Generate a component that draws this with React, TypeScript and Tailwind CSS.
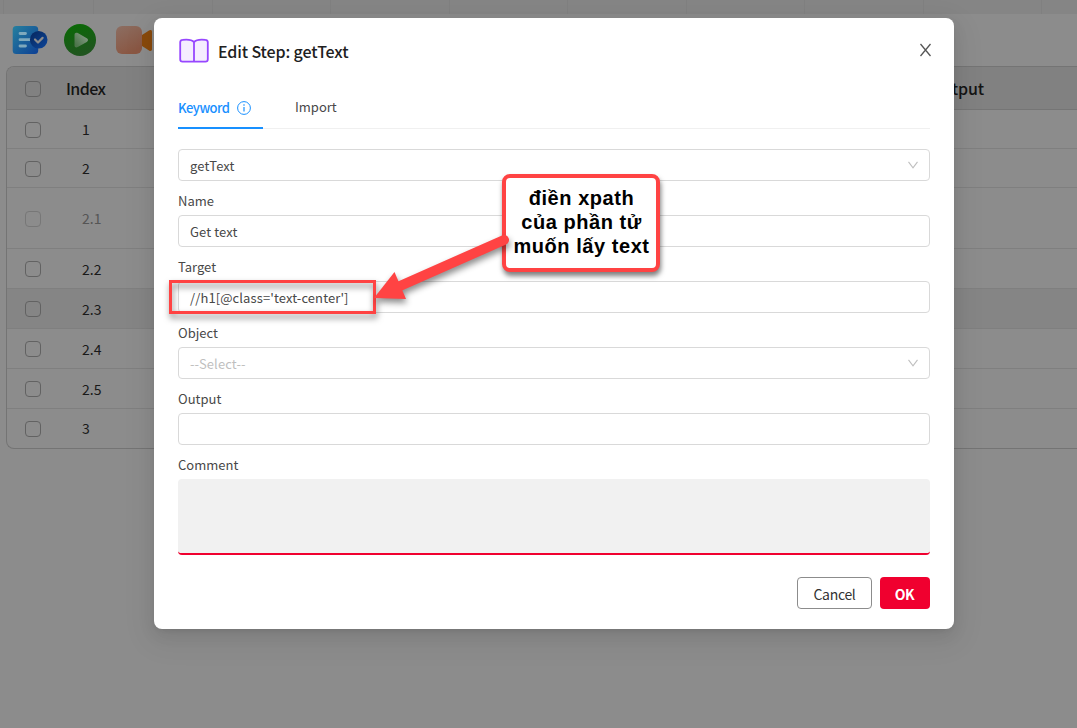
import React from "react";

type Row = { id: string; h: string; faded?: boolean; active?: boolean; up?: boolean };

const rows: Row[] = [
  { id: "1", h: "h-[39px]", up: true },
  { id: "2", h: "h-[39px]", up: true },
  { id: "2.1", h: "h-[61px]", faded: true, up: true },
  { id: "2.2", h: "h-[40px]" },
  { id: "2.3", h: "h-[40px]", active: true },
  { id: "2.4", h: "h-[40px]" },
  { id: "2.5", h: "h-[40px]" },
  { id: "3", h: "h-[39px]", up: true },
];

function Toolbar() {
  return (
    <div className="flex h-[53px] shrink-0 items-center pb-[2px] pl-3">
      <svg width="36" height="32" viewBox="0 0 36 32">
        <defs>
          <linearGradient id="doc" x1="0" y1="0" x2="1" y2="1">
            <stop offset="0" stopColor="#26809f" />
            <stop offset="1" stopColor="#0d3f94" />
          </linearGradient>
          <linearGradient id="badge" x1="0" y1="0" x2="1" y2="1">
            <stop offset="0" stopColor="#06265c" />
            <stop offset="1" stopColor="#0d469a" />
          </linearGradient>
        </defs>
        <rect x="0.7" y="2" width="25.5" height="28" rx="3.5" fill="url(#doc)" />
        <path d="M8 9.500h5.500M8 15.700h10M8 22h5.500" stroke="#7fa9bd" strokeWidth="2.800" strokeLinecap="round" />
        <circle cx="26.700" cy="15.800" r="8.800" fill="url(#badge)" />
        <path d="M23 15.500l3 3 4.600-4.600" fill="none" stroke="#8c8c8c" strokeWidth="2.200" strokeLinecap="round" strokeLinejoin="round" />
      </svg>
      <svg className="ml-4" width="32" height="32" viewBox="0 0 32 32">
        <defs>
          <linearGradient id="disc" x1="0" y1="0" x2="0.3" y2="1">
            <stop offset="0" stopColor="#086b03" />
            <stop offset="1" stopColor="#20551f" />
          </linearGradient>
          <linearGradient id="tri" x1="0.1" y1="0.8" x2="0.8" y2="0.2">
            <stop offset="0" stopColor="#4d754b" />
            <stop offset="1" stopColor="#7f967e" />
          </linearGradient>
        </defs>
        <circle cx="16" cy="16" r="16" fill="url(#disc)" />
        <path d="M10.500 11v10.200c0 2 1.500 2.800 3.300 1.900l9-5.200c1.600-1 1.600-2.700 0-3.700l-9-5.100c-1.800-1-3.300-.1-3.300 1.900z" fill="url(#tri)" />
      </svg>
      <svg className="ml-5" width="36" height="30" viewBox="0 0 36 30">
        <defs>
          <linearGradient id="cam" x1="0" y1="0" x2="0.5" y2="1">
            <stop offset="0" stopColor="#8c6e62" />
            <stop offset="1" stopColor="#8a5743" />
          </linearGradient>
        </defs>
        <rect x="0" y="1" width="26" height="28" rx="6" fill="url(#cam)" />
        <path d="M26 10l7-4.500c1.500-1 3-.5 3 1.200v17.600c0 1.700-1.500 2.200-3 1.200l-7-4.500z" fill="#8a4a0c" />
      </svg>
    </div>
  );
}

function Box({ faded }: { faded?: boolean }) {
  return (
    <span
      className={
        "size-4 shrink-0 rounded-[4px] border " +
        (faded ? "border-[#777777]" : "border-[#626262]")
      }
    />
  );
}

function Workspace() {
  return (
    <div className="flex h-full flex-col">
      <div className="flex h-[14px] shrink-0 overflow-hidden bg-[#858585] pl-[3px]">
        <div className="w-[91px] shrink-0 border-r border-l border-[#808080]" />
        {[0, 1, 2, 3, 4, 5, 6, 7].map((i) => (
          <div key={i} className="w-[118.500px] shrink-0 border-r border-[#808080]" />
        ))}
      </div>
      <Toolbar />
      <div className="-mt-px ml-[6px] flex h-[383px] flex-col overflow-hidden rounded-l-lg border border-r-0 border-[#747474] text-[14px]">
        <div className="flex h-[43px] shrink-0 items-center border-b border-[#757575] bg-[#818181] pt-px pl-[18px] text-[16px] text-[#141414]">
          <Box />
          <span className="-mt-px ml-[25px] w-[864px] font-medium tracking-[-0.600px]">Index</span>
          <span className="-mt-px font-medium tracking-[-0.100px]">Output</span>
        </div>
        {rows.map((r) => (
          <div
            key={r.id}
            className={
              "flex shrink-0 items-center border-b border-[#7f7f7f] pt-px pl-[18px] last:border-b-0 " +
              r.h +
              (r.active ? " bg-[#858585]" : "")
            }
          >
            <Box faded={r.faded} />
            <span
              className={
                "ml-[41px] " +
                (r.up ? "-mt-px " : "pt-px ") +
                (r.faded ? "text-[#555555]" : "text-[#191919]")
              }
            >
              {r.id}
            </span>
          </div>
        ))}
      </div>
    </div>
  );
}

function Chevron() {
  return (
    <svg width="12" height="12" viewBox="0 0 12 12" fill="none" stroke="#bfbfbf" strokeWidth="1.100">
      <path d="M1.500 2.800l4.500 6 4.500-6" />
    </svg>
  );
}

function Field({ label, value, placeholder, select }: { label?: string; value?: string; placeholder?: string; select?: boolean }) {
  return (
    <div className="flex flex-col">
      {label && <label className="flex h-[34px] items-center pt-[5px] leading-[22px]">{label}</label>}
      <div className="flex h-8 items-center justify-between rounded-[4px] border border-[#d9d9d9] bg-white pr-[10px] pl-[11px]">
        <span className={"pt-[2px] tracking-[0.100px] " + (placeholder ? "text-[#bfbfbf]" : "")}>{value || placeholder}</span>
        {select && <Chevron />}
      </div>
    </div>
  );
}

function Dialog() {
  return (
    <div className="flex h-[611px] w-[800px] flex-col rounded-lg bg-white px-6 text-[13px] text-[#484848] shadow-[0_6px_16px_0_rgba(0,0,0,0.08),0_3px_6px_-4px_rgba(0,0,0,0.12),0_9px_28px_8px_rgba(0,0,0,0.05)]">
      <div className="flex h-[66px] shrink-0 items-center">
        <svg width="32" height="28" viewBox="0 0 32 28" fill="#f5edff" stroke="#9747ff" strokeWidth="1.800" strokeLinejoin="round">
          <path d="M16 5.200C14 2.800 9.500 2.300 4.500 2.900 3 3 2.200 3.900 2.200 5.300V22.200C2.200 23.800 3 24.600 4.500 24.600H27.500C29 24.600 29.800 23.800 29.800 22.200V5.300C29.800 3.900 29 3 27.500 2.900 22.500 2.300 18 2.800 16 5.200Z" />
          <path d="M16 5.200V24.600" />
        </svg>
        <h1 className="-mt-px ml-2 text-[16px] font-medium tracking-[-0.120px] text-[#202020]">Edit Step: getText</h1>
        <svg className="mr-[-2px] mb-[2px] ml-auto" width="13" height="14" viewBox="0 0 13 14" fill="none" stroke="#555555" strokeWidth="1.300">
          <path d="M1.500 1l10 12M11.500 1l-10 12" />
        </svg>
      </div>
      <div className="flex h-[45px] shrink-0 border-b border-[#f0f0f0]">
        <div className="-mb-px flex w-[85px] items-center border-b-2 border-[#1890ff] pt-[4px] text-[#1890ff]">
          <span className="w-[52px] font-medium tracking-[-0.500px]">Keyword</span>
          <svg className="ml-[7px] shrink-0" width="14" height="14" viewBox="0 0 14 14" fill="none" stroke="#1890ff">
            <circle cx="7" cy="7" r="6.400" />
            <path d="M7 6v4.500M7 3.300v1.400" strokeWidth="1.200" />
          </svg>
        </div>
        <span className="ml-8 self-center pt-px">Import</span>
      </div>
      <div className="mt-5 flex flex-col">
        <Field value="getText" select />
        <Field label="Name" value="Get text" />
        <Field label="Target" value="//h1[@class='text-center']" />
        <Field label="Object" placeholder="--Select--" select />
        <Field label="Output" />
        <label className="flex h-[34px] items-center pt-[5px] leading-[22px]">Comment</label>
        <div className="h-[76px] rounded-[4px] border-b-2 border-[#f0002f] bg-[#f1f1f1]" />
      </div>
      <div className="mt-[22px] flex justify-end gap-2">
        <button className="h-8 w-[75px] rounded-[4px] border border-[#8c8c8c] pt-[2px] text-[14px] tracking-[-0.300px] text-[#333333]">Cancel</button>
        <button className="h-8 w-[50px] rounded-[4px] bg-[#f0002f] pt-[2px] pr-px text-[14px] font-bold tracking-[-0.500px] text-white">OK</button>
      </div>
    </div>
  );
}

function Annotation() {
  return (
    <>
      <div className="absolute top-[280px] left-[169px] h-[34px] w-[207px] border-[3px] border-[#ff4343] drop-shadow-[1px_4px_3px_rgba(0,0,0,0.5)]" />
      <div className="absolute top-[174px] left-[502px] h-[98px] w-[158px] rounded-[8px] border-4 border-[#ff4343] bg-white pt-[8px] text-center font-['Liberation_Sans',Arial,sans-serif] text-[20px] leading-[24px] font-bold tracking-[0.550px] whitespace-nowrap text-black shadow-[1px_4px_5px_rgba(0,0,0,0.5)]">
        <div className="-mr-2 -ml-2 pl-px">điền xpath<br />của phần tử<br />muốn lấy text</div>
      </div>
      <svg className="absolute top-[225px] left-[365px] drop-shadow-[1px_4px_3px_rgba(0,0,0,0.45)]" width="150" height="85" viewBox="365 225 150 85">
        <path d="M504 240L400 286" stroke="#ff4343" strokeWidth="10" strokeLinecap="round" />
        <path d="M374 298L394.500 272L406 299Z" fill="#ff4343" />
      </svg>
    </>
  );
}

export default function App() {
  return (
    <div className="relative h-[728px] w-[1077px] overflow-hidden bg-[#8c8c8c] font-['Noto_Sans_CJK_SC','Noto_Sans',sans-serif]">
      <Workspace />
      <div className="absolute top-[18px] left-[154px]">
        <Dialog />
      </div>
      <Annotation />
    </div>
  );
}
